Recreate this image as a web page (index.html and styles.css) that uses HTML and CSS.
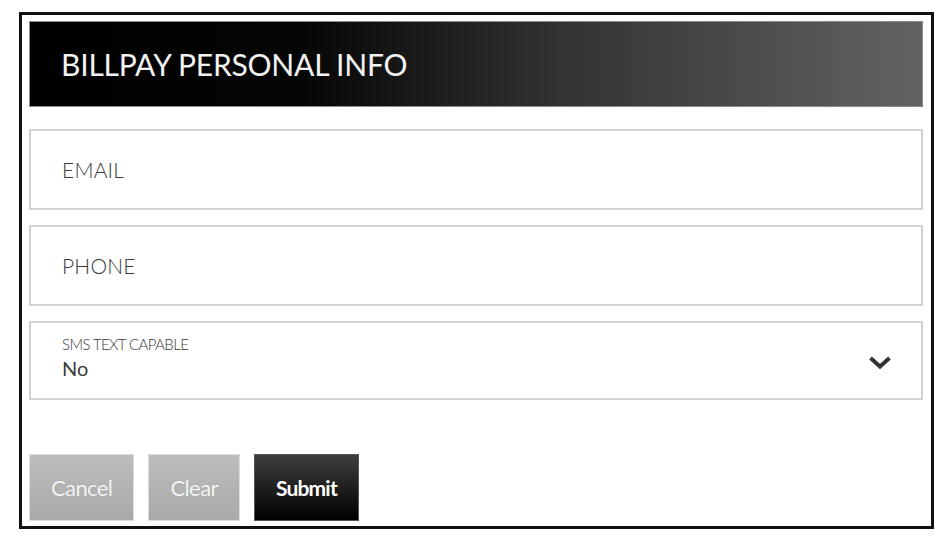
FILE: index.html
```html
<!DOCTYPE html>
<html>
<head>
<meta charset="utf-8">
<link rel="stylesheet" href="styles.css">
</head>
<body>
<div class="frame">
  <div class="header"><h1 class="title">BILLPAY PERSONAL INFO</h1></div>
  <div class="fields">
    <div class="field"><span class="placeholder">EMAIL</span></div>
    <div class="field"><span class="placeholder">PHONE</span></div>
    <div class="field select">
      <div class="select-text">
        <span class="small-label">SMS TEXT CAPABLE</span>
        <span class="value">No</span>
      </div>
      <svg class="chevron" width="24" height="16" viewBox="0 0 24 16"><polyline points="2.5,3 12,11.5 21.5,3" fill="none" stroke="#333" stroke-width="4"/></svg>
    </div>
  </div>
  <div class="actions">
    <button class="btn btn-light">Cancel</button>
    <button class="btn btn-light">Clear</button>
    <button class="btn btn-dark">Submit</button>
  </div>
</div>
</body>
</html>
```
FILE: styles.css
```css
html, body { margin: 0; padding: 0; background: #fff; }
body { font-family: Lato, "Open Sans", sans-serif; }
.frame {
  margin: 12px 0 0 19px;
  width: 915px;
  height: 517px;
  box-sizing: border-box;
  border: 3px solid #111;
  padding: 6px 8px 0 7px;
  display: flex;
  flex-direction: column;
}
.header {
  height: 86px;
  box-sizing: border-box;
  border: 1px solid #8a8a8a;
  background: linear-gradient(to right, #000 0%, #050505 30%, #333 60%, #636363 100%);
  display: flex;
  align-items: center;
  padding-left: 31px;
}
.title {
  margin: 0;
  color: #f2f2f2;
  font-size: 30px;
  font-weight: 400;
  letter-spacing: -0.2px;
}
.fields {
  margin-top: 22px;
  display: flex;
  flex-direction: column;
  gap: 15px;
}
.field {
  height: 81px;
  box-sizing: border-box;
  border: 2px solid #d2d2d2;
  display: flex;
  align-items: center;
  padding-left: 31px;
}
.field.select { height: 79px; padding-right: 30px; justify-content: space-between; }
.placeholder {
  font-size: 21px;
  font-weight: 300;
  color: #3a3a3a;
  letter-spacing: 0.2px;
}
.select-text { display: flex; flex-direction: column; margin-top: -6px; }
.small-label {
  font-size: 15px;
  color: #3a3a3a;
  letter-spacing: -0.6px;
  font-weight: 300;
  line-height: 18px;
}
.value {
  font-size: 20px;
  color: #3a3a3a;
  line-height: 24px;
  margin-top: 3px;
}
.chevron { display: block; margin-top: 4px; margin-right: -1px; }
.actions {
  margin-top: 54px;
  display: flex;
  gap: 14px;
}
.btn {
  height: 67px;
  border: 1px solid #ddd;
  padding: 0 21px;
  font-family: Lato, sans-serif;
  font-size: 22px;
  letter-spacing: -0.6px;
  color: #f4f4f4;
  cursor: pointer;
}
.btn-light {
  background: linear-gradient(to bottom, #bdbdbd, #a9a9a9);
  text-shadow: 0 0 1px rgba(0,0,0,0.15);
}
.btn-dark {
  background: linear-gradient(to bottom, #3e3e3e, #000);
  border-color: #555;
  color: #fff;
  font-size: 21px;
  font-weight: 700;
  letter-spacing: -0.8px;
  padding: 0 21px;
}
```
